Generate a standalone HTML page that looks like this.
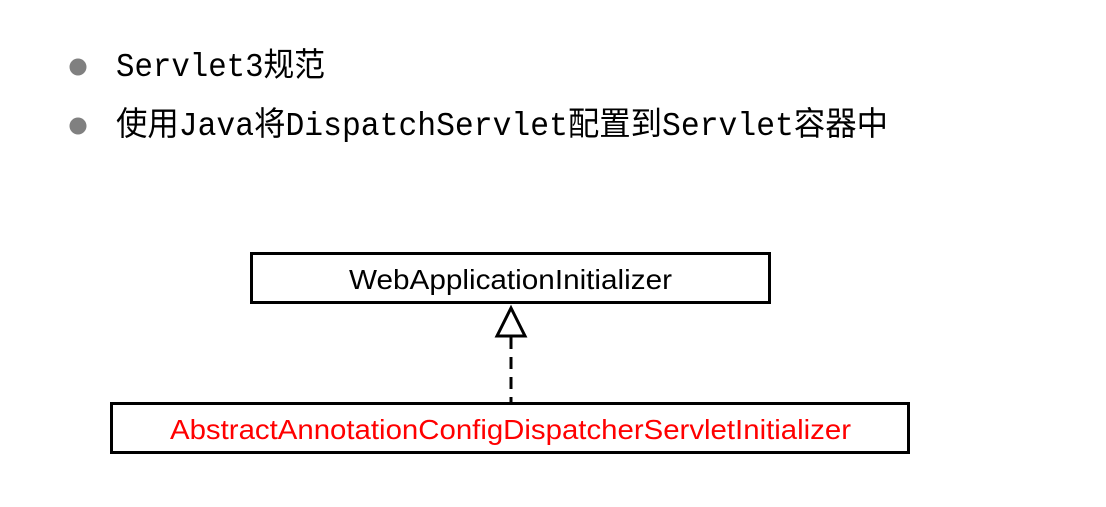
<!DOCTYPE html>
<html><head><meta charset="utf-8"><style>
html,body{margin:0;padding:0;background:#fff;width:1106px;height:507px;overflow:hidden}
</style></head><body>
<svg width="1106" height="507" xmlns="http://www.w3.org/2000/svg">
<circle cx="78" cy="67" r="8.5" fill="#808080"/>
<circle cx="78" cy="126" r="8.5" fill="#808080"/>
<text x="116" y="76" font-family="Liberation Mono, Noto Sans CJK SC, monospace" font-size="33" fill="#000" textLength="209" lengthAdjust="spacingAndGlyphs">Servlet3规范</text>
<text x="116" y="135" font-family="Liberation Mono, Noto Sans CJK SC, monospace" font-size="33" fill="#000" textLength="772" lengthAdjust="spacingAndGlyphs">使用Java将DispatchServlet配置到Servlet容器中</text>
<rect x="251.5" y="253.5" width="518" height="49" fill="#fff" stroke="#000" stroke-width="3"/>
<text x="349" y="289" font-family="Liberation Sans, sans-serif" font-size="28" fill="#000" textLength="323" lengthAdjust="spacingAndGlyphs">WebApplicationInitializer</text>
<polygon points="511,308 497,336 525,336" fill="#fff" stroke="#000" stroke-width="3"/>
<line x1="511" y1="337" x2="511" y2="402" stroke="#000" stroke-width="3" stroke-dasharray="12,8"/>
<rect x="111.5" y="403.5" width="797" height="49" fill="#fff" stroke="#000" stroke-width="3"/>
<text x="170" y="439" font-family="Liberation Sans, sans-serif" font-size="28" fill="#ff0000" textLength="681" lengthAdjust="spacingAndGlyphs">AbstractAnnotationConfigDispatcherServletInitializer</text>
</svg>
</body></html>
